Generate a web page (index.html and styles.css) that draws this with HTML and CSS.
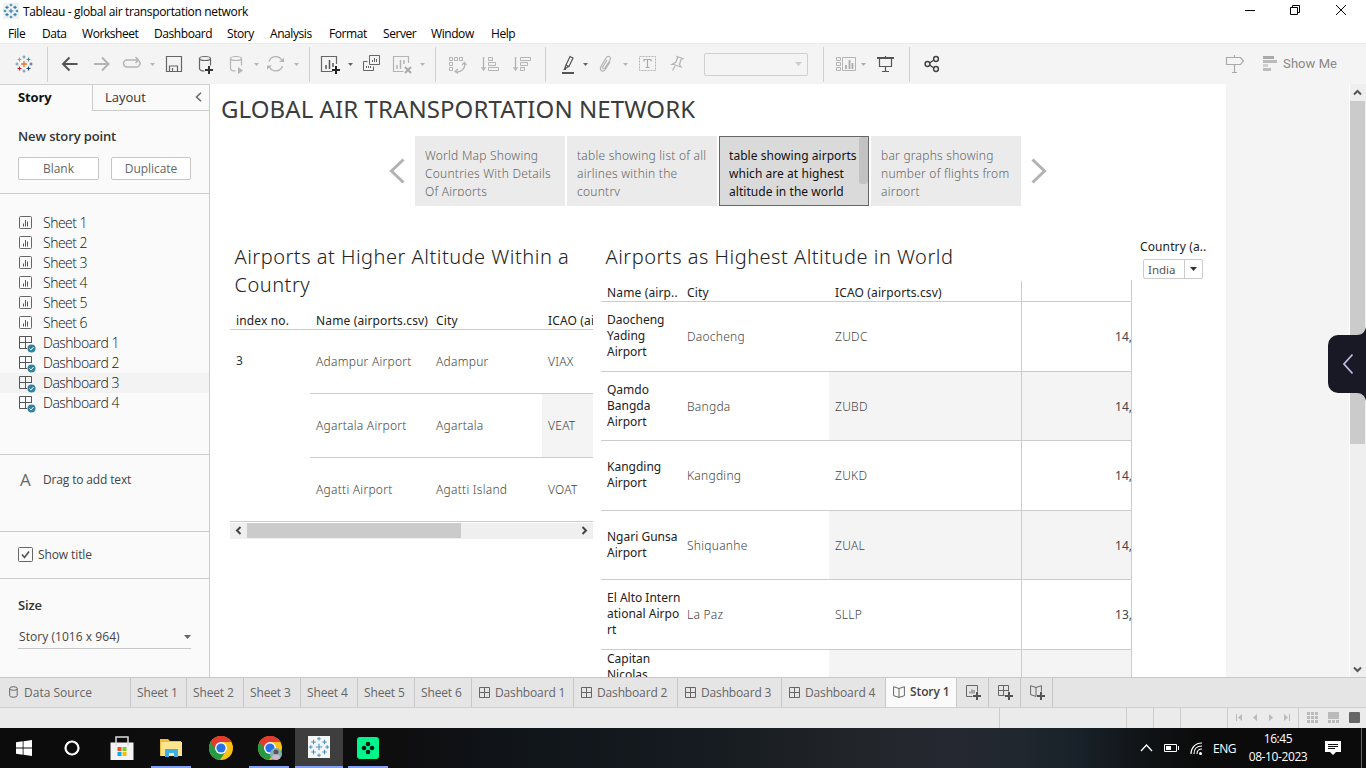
FILE: index.html
```html
<!DOCTYPE html>
<html lang="en">
<head>
<meta charset="utf-8">
<title>Tableau - global air transportation network</title>
<link rel="stylesheet" href="styles.css">
</head>
<body>
<svg width="0" height="0" class="defs">
  <defs>
    <g id="sheet"><rect x=".5" y=".5" width="12" height="12" rx="1" fill="none" stroke="#666"/><path d="M4.500 7.500v3M6.500 4v6.500M8.500 5.500v5" stroke="#555"/></g>
    <g id="dash"><path d="M12.500 7V.5H.5v12H8M6.500 .5v12M.5 6.500h12" fill="none" stroke="#555"/><circle cx="12.500" cy="12.500" r="4" fill="#357f9f"/><path d="M10.500 12.500l1.500 1.500 2.500-3" fill="none" stroke="#fff"/></g>
    <g id="grid"><path d="M.5 .5h10v10H.5zM5.500 .5v10M.5 5.500h10" fill="none" stroke="#666"/></g>
    <path id="down" d="M0 0h5L2.500 3z"/>
    <g id="chrome"><circle cx="12" cy="12" r="12" fill="#fbc116"/><path d="M12 12L1.600 6A12 12 0 0 1 22.400 6H12z" fill="#e33b2e"/><path d="M12 12L1.600 6A12 12 0 0 0 11 24l6-9z" fill="#269a43"/><path d="M1.600 6A12 12 0 0 1 22.400 6H12L7 14z" fill="#e33b2e"/><circle cx="12" cy="12" r="6" fill="#fff"/><circle cx="12" cy="12" r="4.600" fill="#2673e8"/></g>
    <path id="pluses" d="M12 8.500v7M8.500 12h7M12 1v4M10 3h4M12 19v4M10 21h4M3 10v4M1 12h4M21 10v4M19 12h4M6 4v5M3.500 6.500h5M18 4v5M15.500 6.500h5M6 15v5M3.500 17.500h5M18 15v5M15.500 17.500h5" fill="none"/>
  </defs>
</svg>

<header class="titlebar">
  <svg class="app-icon" width="16" height="16" viewBox="0 0 24 24"><rect width="24" height="24" fill="#f1f1f1"/><use href="#pluses" stroke="#2f7fae" stroke-width="1.700"/></svg>
  <span>Tableau - global air transportation network</span>
  <svg class="win-controls" width="120" height="22" viewBox="1240 0 120 22" fill="none" stroke="#000"><path d="M1245 10.500h10"/><path d="M1290.500 7.500h7v7h-7zM1292.500 7.500v-2h7v7h-2"/><path d="M1336 5l10 10M1346 5l-10 10"/></svg>
</header>
<nav class="menubar">
  <span class="m-file">File</span><span class="m-data">Data</span><span class="m-work">Worksheet</span><span class="m-dash">Dashboard</span><span class="m-story">Story</span><span class="m-ana">Analysis</span><span class="m-form">Format</span><span class="m-serv">Server</span><span class="m-wind">Window</span><span>Help</span>
</nav>

<div class="toolbar">
  <svg class="logo" width="18" height="18" viewBox="0 0 18 18" fill="none" stroke-width="1.200"><path d="M9 6v6M6 9h6" stroke="#e8762d" stroke-width="1.400"/><path d="M9 .5v3M7.500 2h3" stroke="#5b9bb5"/><path d="M9 14.500v3M7.500 16h3" stroke="#7a8fb5"/><path d="M2 7.500v3M.5 9h3" stroke="#6a9fb5"/><path d="M16 7.500v3M14.500 9h3" stroke="#5b6591"/><path d="M4.500 2.500v4M2.500 4.500h4" stroke="#eb912c"/><path d="M13.500 2.500v4M11.500 4.500h4" stroke="#59879b"/><path d="M4.500 11.500v4M2.500 13.500h4" stroke="#c72035"/><path d="M13.500 11.500v4M11.500 13.500h4" stroke="#1f447e"/></svg>
  <div class="tgroup g-data">
    <svg width="248" height="30" viewBox="60 49 248 30" fill="none">
      <path d="M77.500 64H63M69.500 57.500L63 64l6.500 6.500" stroke="#555" stroke-width="2"/>
      <path d="M94 64h14.500M102 57.500l6.500 6.500-6.500 6.500" stroke="#b4b4b4" stroke-width="2"/>
      <path d="M132 60h-5a3.500 3.500 0 0 0 0 7h10a3.500 3.500 0 0 0 2-6M131 60h7M135.500 57l3 3-3 3" stroke="#b4b4b4" stroke-width="1.500"/>
      <use href="#down" x="150" y="63" fill="#b4b4b4"/>
      <path d="M166.500 56.500h15v15h-15zM169.500 71v-5h8v5M172.500 71v-3" stroke="#666" stroke-width="1.200"/>
      <path d="M199.500 58.500v10c0 1.500 2 2.500 5 2.500M210.500 58.500v7" stroke="#666" stroke-width="1.200"/><ellipse cx="205" cy="58.500" rx="5.500" ry="2" stroke="#666" stroke-width="1.200"/><path d="M209 66v8M205 70h8" stroke="#333" stroke-width="2"/>
      <path d="M230.500 58.500v10c0 1.500 2 2.500 5 2.500M241.500 58.500v7" stroke="#b4b4b4" stroke-width="1.200"/><ellipse cx="236" cy="58.500" rx="5.500" ry="2" stroke="#b4b4b4" stroke-width="1.200"/><path d="M238 67l5 3.500-5 3.500z" fill="#b4b4b4"/>
      <use href="#down" x="254" y="63" fill="#b4b4b4"/>
      <path d="M269 61.500a7 7 0 0 1 13-1M282.500 66a7 7 0 0 1-13 1" stroke="#b4b4b4" stroke-width="1.300"/><path d="M284 58v4h-5zM267 69.500v-4h5z" fill="#b4b4b4"/>
      <use href="#down" x="294" y="63" fill="#b4b4b4"/>
    </svg>
  </div>
  <div class="tgroup g-sheet">
    <svg width="122" height="30" viewBox="313 49 122 30" fill="none">
      <path d="M336.500 64v-7.500h-15v15h11" stroke="#666" stroke-width="1.200"/><path d="M326 69v-4M329.500 69v-9M333 67v-4" stroke="#555" stroke-width="1.500"/><path d="M336 66v8M332 70h8" stroke="#222" stroke-width="2"/>
      <use href="#down" x="348" y="63" fill="#666"/>
      <path d="M369.500 55.500h10v9h-10zM367.500 61.500h-4v9h10v-4" stroke="#666"/><path d="M372.500 62v-2M374.500 62v-4M376.500 62v-3M366.500 68v-2M368.500 68v-2M370.500 68v-2" stroke="#666"/>
      <path d="M408.500 63v-6.500h-15v15h10" stroke="#b4b4b4" stroke-width="1.200"/><path d="M397 69v-4M400.500 69v-9M404 64v-4" stroke="#b4b4b4" stroke-width="1.500"/><path d="M405 67l6 6M411 67l-6 6" stroke="#aaa" stroke-width="2"/>
      <use href="#down" x="420" y="63" fill="#b4b4b4"/>
    </svg>
  </div>
  <div class="tgroup g-sort">
    <svg width="106" height="30" viewBox="438 49 106 30" fill="none" stroke="#b4b4b4">
      <path d="M449.500 57.500h3v3h-3zM454.500 57.500h3v3h-3zM459.500 57.500h3v3h-3zM449.500 62.500h3v3h-3zM449.500 67.500h3v3h-3z"/><path d="M464.500 63.500a7 7 0 0 1-9 8M462 65l2.500-2.500 2 2.500M458 69l-3 2.500 3 2" stroke-width="1.200"/>
      <path d="M483.500 57v12M481.500 67l2 3 2-3" stroke-width="1.300"/><path d="M488.500 57.500h4v3h-4zM488.500 62.500h7v3h-7zM488.500 67.500h10v3h-10z"/>
      <path d="M515.500 57v12M513.500 67l2 3 2-3" stroke-width="1.300"/><path d="M520.500 57.500h10v3h-10zM520.500 62.500h7v3h-7zM520.500 67.500h4v3h-4z"/>
    </svg>
  </div>
  <div class="tgroup g-format">
    <svg width="150" height="30" viewBox="549 49 150 30" fill="none">
      <path d="M562 73h12" stroke="#555" stroke-width="2"/><path d="M566 65l4-8.500 3 1.500-4 8.500zM566 65l-1.500 4 4-2.500M564 69.500h2" stroke="#555" stroke-width="1.200"/>
      <use href="#down" x="583" y="63" fill="#666"/>
      <path d="M606 60l-4 6.500c-1 2 1 3 2 1.500l5-8c2-3-2-5-4-2l-5 8.500c-2 4 2 6 4 3.500l5-8" transform="translate(1 0)" stroke="#b4b4b4" stroke-width="1.200"/>
      <use href="#down" x="623" y="63" fill="#b4b4b4"/>
      <rect x="639.500" y="56.500" width="16" height="14" stroke="#b4b4b4" stroke-dasharray="2 1"/><path d="M644 61.500v-2h7v2M647.500 59.500v8M645.500 67.500h4" stroke="#aaa" stroke-width="1.200"/>
      <path d="M677 56.500l6 2-2 1-1.500 5 1.500 2.500-3-1-4-1.500-2 0 4-2.500 1.500-4zM675 66l-2.500 4.500" stroke="#b4b4b4" stroke-width="1.200"/>
    </svg>
    <div class="fit-box"><svg width="7" height="4"><path d="M0 0h7L3.500 4z" fill="#ccc"/></svg></div>
  </div>
  <div class="tgroup g-view">
    <svg width="70" height="30" viewBox="828 49 70 30" fill="none">
      <path d="M836.500 57.500h4v3h-4zM836.500 62.500h4v3h-4zM836.500 67.500h4v3h-4zM842.500 57.500h13v13h-13z" stroke="#b4b4b4"/><path d="M846 69v-4M849.500 69v-9M852.500 69v-6" stroke="#aaa" stroke-width="1.800"/>
      <use href="#down" x="861" y="63" fill="#aaa"/>
      <path d="M877 58h17" stroke="#555" stroke-width="2"/><path d="M879.500 58v8.500h12V58M885.500 56v1M885.500 67v4M882 71.500h7" stroke="#555" stroke-width="1.200"/>
    </svg>
  </div>
  <div class="tgroup g-share">
    <svg width="22" height="30" viewBox="920 49 22 30" fill="none" stroke="#444" stroke-width="1.500"><circle cx="927.500" cy="64" r="2.400"/><circle cx="936" cy="59" r="2.400"/><circle cx="936" cy="69" r="2.400"/><path d="M929.500 63l4.500-3M929.500 65l4.500 3"/></svg>
  </div>
  <div class="showme">
    <svg width="54" height="22" viewBox="1224 53 54 22" fill="none"><path d="M1226.500 57.500h14l3 3.500-3 3.500h-14zM1234.500 55v2M1234.500 65v7M1232 72.500h5" stroke="#aaa" stroke-width="1.200"/><path d="M1263 57.500h11" stroke="#aaa" stroke-width="3"/><path d="M1263 61.500h14M1263 69.500h8" stroke="#bbb" stroke-width="3"/><path d="M1263 65.500h5" stroke="#d0d0d0" stroke-width="3"/></svg>
    <span>Show Me</span>
  </div>
</div>

<main class="work">
  <aside class="side">
    <div class="side-tabs"><div class="tab-on">Story</div><div class="tab-off"><span>Layout</span><svg width="7" height="10" fill="none" stroke="#666" stroke-width="1.500"><path d="M6 .7L1.500 5 6 9.300"/></svg></div></div>
    <section class="new-point">
      <h2>New story point</h2>
      <div class="btns"><button>Blank</button><button>Duplicate</button></div>
    </section>
    <section class="sheets">
      <div><svg width="18" height="18"><use href="#sheet"/></svg>Sheet 1</div>
      <div><svg width="18" height="18"><use href="#sheet"/></svg>Sheet 2</div>
      <div><svg width="18" height="18"><use href="#sheet"/></svg>Sheet 3</div>
      <div><svg width="18" height="18"><use href="#sheet"/></svg>Sheet 4</div>
      <div><svg width="18" height="18"><use href="#sheet"/></svg>Sheet 5</div>
      <div><svg width="18" height="18"><use href="#sheet"/></svg>Sheet 6</div>
      <div><svg width="18" height="18"><use href="#dash"/></svg>Dashboard 1</div>
      <div><svg width="18" height="18"><use href="#dash"/></svg>Dashboard 2</div>
      <div class="hover"><svg width="18" height="18"><use href="#dash"/></svg>Dashboard 3</div>
      <div><svg width="18" height="18"><use href="#dash"/></svg>Dashboard 4</div>
    </section>
    <section class="drag"><span class="glyph-a">A</span><span>Drag to add text</span></section>
    <section class="show-title"><svg width="15" height="15" fill="none"><rect x=".5" y=".5" width="14" height="14" rx="1" stroke="#666"/><path d="M4 7.500l2.500 3L11 4.500" stroke="#555" stroke-width="1.700"/></svg><span>Show title</span></section>
    <section class="size"><h2>Size</h2><div class="select"><span>Story (1016 x 964)</span><svg width="7" height="4"><path d="M0 0h7L3.500 4z" fill="#666"/></svg></div></section>
  </aside>

  <div class="canvas">
    <h1>GLOBAL AIR TRANSPORTATION NETWORK</h1>
    <div class="points">
      <svg width="16" height="26" fill="none" stroke="#b2b2b2" stroke-width="3"><path d="M14.500 1.500L2.500 13l12 11.500"/></svg>
      <div class="point-list">
        <div class="point"><p>World Map Showing<br>Countries With Details<br>Of Airports</p></div>
        <div class="point"><p>table showing list of all<br>airlines within the<br>country</p></div>
        <div class="point current"><p>table showing airports<br>which are at highest<br>altitude in the world</p><i class="thumb"></i></div>
        <div class="point"><p>bar graphs showing<br>number of flights from<br>airport</p></div>
      </div>
      <svg width="16" height="26" fill="none" stroke="#b2b2b2" stroke-width="3"><path d="M1.500 1.500L13.500 13l-12 11.500"/></svg>
    </div>
    <div class="views">
      <div class="view left">
        <h3>Airports at Higher Altitude Within a<br>Country</h3>
        <div class="lrow lhead"><span>index no.</span><span>Name (airports.csv)</span><span>City</span><span>ICAO (airports.csv)</span></div>
        <div class="lbody">
          <div class="idx">3</div>
          <div class="lrows">
            <div class="lrow"><span>Adampur Airport</span><span>Adampur</span><span>VIAX</span></div>
            <div class="lrow shade"><span>Agartala Airport</span><span>Agartala</span><span>VEAT</span></div>
            <div class="lrow"><span>Agatti Airport</span><span>Agatti Island</span><span>VOAT</span></div>
          </div>
        </div>
        <div class="hscroll"><svg width="7" height="9" fill="none" stroke="#444" stroke-width="2"><path d="M5.500 1L2 4.500 5.500 8"/></svg><i></i><svg width="7" height="9" fill="none" stroke="#444" stroke-width="2"><path d="M1.500 1L5 4.500 1.500 8"/></svg></div>
      </div>
      <div class="view right">
        <h3>Airports as Highest Altitude in World</h3>
        <div class="rrow rhead"><span>Name (airp..</span><span>City</span><span>ICAO (airports.csv)</span><span></span></div>
        <div class="rrow tall"><b>Daocheng<br>Yading<br>Airport</b><span>Daocheng</span><span>ZUDC</span><span class="num">14,</span></div>
        <div class="rrow shade"><b>Qamdo<br>Bangda<br>Airport</b><span>Bangda</span><span>ZUBD</span><span class="num">14,</span></div>
        <div class="rrow tall"><b>Kangding<br>Airport</b><span>Kangding</span><span>ZUKD</span><span class="num">14,</span></div>
        <div class="rrow shade"><b>Ngari Gunsa<br>Airport</b><span>Shiquanhe</span><span>ZUAL</span><span class="num">14,</span></div>
        <div class="rrow tall"><b>El Alto Intern<br>ational Airpo<br>rt</b><span>La Paz</span><span>SLLP</span><span class="num">13,</span></div>
        <div class="rrow shade last"><b>Capitan<br>Nicolas</b><span></span><span></span><span></span></div>
      </div>
      <div class="filter"><label>Country (a..</label><div class="combo"><span>India</span><em><svg width="7" height="4"><path d="M0 0h7L3.500 4z" fill="#333"/></svg></em></div></div>
    </div>
  </div>
  <div class="vscroll"><svg width="9" height="7" fill="none" stroke="#555" stroke-width="2"><path d="M1 5.500L4.500 2 8 5.500"/></svg><i></i><svg width="9" height="7" fill="none" stroke="#555" stroke-width="2"><path d="M1 1.500L4.500 5 8 1.500"/></svg></div>
</main>
<svg class="drawer" width="38" height="74" viewBox="0 0 38 74"><path d="M38 0v74c-1-5-4-8-9-8H10a10 10 0 0 1-10-10V18A10 10 0 0 1 10 8h19c5 0 8-3 9-8z" fill="#181925"/><path d="M24.500 27.500L16 37l8.500 9.500" fill="none" stroke="#b9bce0" stroke-width="1.800"/></svg>

<div class="tabs">
  <div class="t src"><svg width="9" height="12" fill="none" stroke="#666"><path d="M.7 2.500v7c0 1 1.500 1.700 3.700 1.700s3.800-.7 3.800-1.700v-7"/><ellipse cx="4.500" cy="2.500" rx="3.800" ry="1.800"/></svg>Data Source</div>
  <div class="t s1">Sheet 1</div><div class="t">Sheet 2</div><div class="t">Sheet 3</div><div class="t">Sheet 4</div><div class="t">Sheet 5</div><div class="t">Sheet 6</div>
  <div class="t d d1"><svg width="11" height="11"><use href="#grid"/></svg>Dashboard 1</div><div class="t d"><svg width="11" height="11"><use href="#grid"/></svg>Dashboard 2</div><div class="t d"><svg width="11" height="11"><use href="#grid"/></svg>Dashboard 3</div><div class="t d"><svg width="11" height="11"><use href="#grid"/></svg>Dashboard 4</div>
  <div class="t story"><svg width="12" height="12" fill="none" stroke="#666"><path d="M6 2.500L.6.700v9L6 11.400l5.400-1.700v-9zM6 2.500v9"/></svg>Story 1</div>
  <div class="t add"><svg width="16" height="16" fill="none" stroke="#666"><path d="M11.500 6.500V.5H.5v11H6.500M4 8.500v-2M6 8.500v-4M8 8.500V5"/><path d="M11 7v8M7 11h8" stroke="#555" stroke-width="2"/></svg></div>
  <div class="t add"><svg width="16" height="16" fill="none" stroke="#666"><path d="M10.500 6.500V.5H.5v10H6.500M5.500 .5v10M.5 5.500h10"/><path d="M11 7v8M7 11h8" stroke="#555" stroke-width="2"/></svg></div>
  <div class="t add"><svg width="16" height="16" fill="none" stroke="#666"><path d="M6 2.500L.6.700v9L6 11.400M6 2.500L11.400.7V6.500M6 2.500v9"/><path d="M11 7v8M7 11h8" stroke="#555" stroke-width="2"/></svg></div>
</div>
<div class="status">
  <svg width="367" height="21" viewBox="999 707 367 21"><path d="M999.500 707v21M1126.500 707v21M1153.500 707v21M1180.500 707v21M1227.500 707v21M1298.500 707v21" stroke="#ccc"/><path d="M1242 714v7l-4-3.500zM1257 714v7l-4-3.500zM1269 714v7l4-3.500zM1284 714v7l4-3.500zM1236 714h1v7h-1zM1289 714h1v7h-1z" fill="#bbb"/><path d="M1307 712h3v3h-3zM1311 712h3v3h-3zM1315 712h3v3h-3zM1307 716h3v3h-3zM1311 716h3v3h-3zM1315 716h3v3h-3zM1307 720h3v3h-3zM1311 720h3v3h-3zM1315 720h3v3h-3zM1328 712h11v7h-11zM1328 720h3v3h-3zM1332 720h3v3h-3zM1336 720h3v3h-3z" fill="#bbb"/><rect x="1349" y="712" width="11" height="11" rx="1" fill="#666"/></svg>
</div>
<footer class="taskbar">
  <div class="task"><svg width="16" height="16" fill="#fff"><path d="M0 2.300l6.700-1v6.200H0zM7.500 1.200L16 0v7.500H7.500zM0 8.500h6.700v6.200L0 13.700zM7.500 8.500H16V16l-8.500-1.200z"/></svg></div>
  <div class="task"><svg width="16" height="16"><circle cx="8" cy="8" r="6.500" fill="none" stroke="#fff" stroke-width="2.200"/></svg></div>
  <div class="task"><svg width="24" height="24"><path d="M.5 6.500h23V24H.5z" fill="#f4f4f4"/><path d="M6 10V1h12v9" fill="none" stroke="#ddd" stroke-width="1.500"/><path fill="#f1511b" d="M7.500 11h4v4h-4z"/><path fill="#80cc28" d="M12.500 11h4v4h-4z"/><path fill="#00adef" d="M7.500 16h4v4h-4z"/><path fill="#fbbc09" d="M12.500 16h4v4h-4z"/></svg></div>
  <div class="task open"><svg width="22" height="20"><path d="M0 1h8l2 2h11v15H0z" fill="#f0bd3d"/><path d="M1 4h21v14H1z" fill="#ffe48f"/><path d="M5 19v-8h13v8h-4v-4H9v4z" fill="#3cb0e5"/></svg></div>
  <div class="task"><svg width="24" height="24"><use href="#chrome"/></svg></div>
  <div class="task open"><svg width="24" height="24"><use href="#chrome"/><circle cx="18" cy="18" r="6" fill="#78b9b5"/><circle cx="18" cy="16" r="2.500" fill="#6b4a50"/><path d="M14 22c0-5 8-5 8 0-2 2.500-6 2.500-8 0" fill="#d5b5c8"/></svg></div>
  <div class="task active"><svg width="22" height="22" viewBox="0 0 24 24"><rect width="24" height="24" fill="#f4f6f8"/><use href="#pluses" stroke="#4b93c0" stroke-width="1.200"/></svg></div>
  <div class="task open"><svg width="22" height="22"><rect width="22" height="22" rx="3" fill="#00f58a"/><g fill="#0c1a14"><circle cx="11" cy="7" r="2.300"/><circle cx="11" cy="15" r="2.300"/><circle cx="7" cy="11" r="2.300"/><circle cx="15" cy="11" r="2.300"/></g></svg></div>
  <div class="tray">
    <svg width="66" height="20" viewBox="1138 738 66 20" fill="none" stroke="#fff"><path d="M1141 751l5.500-6 5.500 6" stroke-width="1.300"/><path d="M1164.500 744.500h12v7h-12zM1178.500 746v4"/><path d="M1166 746h5v4h-5z" fill="#fff" stroke="none"/><path d="M1191 754c0-6 4-11 11-11M1194 754c0-5 3-8 8-8M1197 754c0-3 2-5 5-5" stroke-width="1.100"/><circle cx="1200.500" cy="753.500" r="1.500" fill="#fff" stroke="none"/></svg>
    <span class="lang">ENG</span>
    <div class="clock">16:45<br>08-10-2023</div>
    <svg width="16" height="16"><path d="M0 1h16v11h-5l-3 3-3-3H0z" fill="#fff"/><path d="M3 4.500h10M3 6.500h10M3 8.500h7" stroke="#111"/></svg>
    <i></i>
  </div>
</footer>
</body>
</html>
```
FILE: styles.css
```css
* { box-sizing: border-box; }
body { margin: 0; width: 1366px; height: 768px; overflow: hidden; display: flex; flex-direction: column; background: #fff; font-family: "Open Sans", "Noto Sans", sans-serif; font-size: 12px; color: #333; white-space: nowrap; }
h1, h2, h3, p { margin: 0; font-weight: inherit; }
svg { flex: none; display: block; }
.defs { position: absolute; }

.titlebar { height: 22px; display: flex; align-items: center; padding: 0 6px 0 3px; color: #000; letter-spacing: -.34px; }
.app-icon { margin: 0 4px 0 0; }
.win-controls { margin-left: auto; }
.menubar { height: 21px; display: flex; align-items: center; padding: 1px 0 0 8px; color: #000; letter-spacing: -.43px; }
.m-file { width: 34px; } .m-data { width: 40px; } .m-work { width: 72px; } .m-dash { width: 73px; } .m-story { width: 43px; }
.m-ana { width: 59px; } .m-form { width: 54px; } .m-serv { width: 48px; } .m-wind { width: 60px; }

.toolbar { height: 41px; flex: none; display: flex; align-items: center; background: #f4f4f4; border-top: 1px solid #ebebeb; padding-right: 29px; }
.logo { margin: 0 14px 0 15px; }
.tgroup { flex: none; height: 35px; display: flex; align-items: center; border-left: 1px solid #d0d0d0; }
.g-data { width: 262px; padding-left: 12px; }
.g-sheet { width: 126px; padding-left: 3px; }
.g-sort { width: 110px; padding-left: 2px; }
.g-format { width: 278px; padding-left: 3px; }
.g-view { width: 86px; padding-left: 4px; }
.g-share { padding-left: 10px; }
.fit-box { width: 104px; height: 23px; margin-left: 5px; border: 1px solid #d0d0d0; border-radius: 2px; display: flex; align-items: center; justify-content: flex-end; padding-right: 5px; }
.showme { margin-left: auto; display: flex; align-items: center; gap: 5px; font: 400 13px Roboto, sans-serif; color: #888; letter-spacing: .05px; }
.showme span { margin-top: -1px; }

.work { height: 593px; flex: none; display: flex; background: #f4f4f4; overflow: hidden; }
.side { width: 210px; flex: none; background: #fafafa; border-right: 1px solid #ccc; border-top: 1px solid #d0d0d0; display: flex; flex-direction: column; color: #444; }
.side h2 { font-weight: 600; font-size: 13px; line-height: 18px; color: #333; letter-spacing: -.13px; }
.side-tabs { height: 26px; display: flex; font-size: 13px; line-height: 25px; }
.tab-on { width: 92px; padding-left: 18px; font-weight: 700; color: #111; letter-spacing: -.15px; }
.tab-off { flex: 1; border-left: 1px solid #ccc; border-bottom: 1px solid #ccc; padding: 0 7px 0 12px; display: flex; justify-content: space-between; color: #333; }
.tab-off svg { margin-top: 7px; }
.new-point { height: 83px; border-bottom: 1px solid #ccc; padding: 16px 18px 0; }
.btns { display: flex; gap: 12px; margin-top: 12px; }
.btns button { height: 23px; width: 81px; padding: 0 0 1px; border: 1px solid #c6c6c6; border-radius: 2px; background: #fff; font: 400 12px "Open Sans", sans-serif; color: #666; letter-spacing: -.05px; }
.btns button + button { width: 80px; }
.sheets { height: 261px; border-bottom: 1px solid #ccc; padding-top: 19px; font-weight: 300; font-size: 14px; letter-spacing: -.5px; color: #111; }
.sheets div { height: 20px; display: flex; align-items: center; gap: 6px; padding-left: 19px; line-height: 18px; }
.sheets svg { margin-top: 4px; }
.hover { background: #f3f3f3; }
.drag { height: 77px; border-bottom: 1px solid #ccc; display: flex; padding: 15px 0 0 20px; line-height: 19px; letter-spacing: -.15px; }
.glyph-a { width: 23px; font-size: 17px; color: #666; }
.show-title { height: 47px; border-bottom: 1px solid #ccc; display: flex; align-items: center; padding: 0 0 1px 18px; gap: 5px; letter-spacing: -.1px; }
.size { padding: 17px 18px 0; }
.select { width: 173px; height: 24px; margin-top: 11px; border-bottom: 1px solid #c6c6c6; padding-left: 1px; display: flex; align-items: center; justify-content: space-between; letter-spacing: .05px; }

.canvas { width: 1016px; flex: none; height: 593px; background: #fff; overflow: hidden; font-family: "Noto Sans", sans-serif; }
h1 { font-size: 24px; font-weight: 400; line-height: 34px; padding: 8px 0 0 11px; letter-spacing: .08px; color: #3c3c3c; height: 52px; }
.points { display: flex; align-items: center; height: 70px; padding-left: 179px; gap: 10px; }
.points > svg { margin-top: -1px; }
.point-list { display: flex; gap: 2px; }
.point { position: relative; width: 150px; height: 70px; background: #ebebeb; padding: 11px 0 0 10px; font-weight: 300; color: #666; letter-spacing: .24px; }
.point p { line-height: 18px; height: 49px; overflow: hidden; }
.current { background: #dadada; border: 1px solid #666; padding: 10px 0 0 9px; font-weight: 400; color: #111; letter-spacing: .05px; }
.thumb { position: absolute; right: 0; top: 0; width: 9px; height: 47px; border-radius: 3px; background: #c2c2c2; }
.views { display: flex; padding: 37px 0 0 20px; }
h3 { font-size: 20px; line-height: 28px; font-weight: 300; letter-spacing: .5px; color: #222; padding-left: 4.500px; }
.view { overflow: hidden; letter-spacing: .26px; font-weight: 300; }
.view.left { width: 363px; margin-right: 8px; }
.lhead { height: 31px; border-bottom: 1px solid #ccc; color: #222; font-weight: 400; letter-spacing: .14px; padding-top: 13px; line-height: 18px; }
.lrow { display: flex; }
.lrow span { flex: none; padding-left: 6px; }
.lhead span:nth-child(1) { width: 80px; }
.lhead span:nth-child(2) { width: 120px; }
.lhead span:nth-child(3) { width: 112px; }
.lbody { display: flex; border-bottom: 1px solid #ccc; height: 192px; }
.idx { width: 80px; flex: none; padding: 22px 0 0 6px; font-weight: 400; line-height: 18px; }
.lrows { flex: 1; min-width: 0; }
.lrows .lrow { height: 64px; border-bottom: 1px solid #ccc; line-height: 64px; color: #444; }
.lrows span:nth-child(1) { width: 120px; }
.lrows span:nth-child(2) { width: 112px; }
.lrows span:nth-child(3) { width: 60px; }
.lrows .shade span:nth-child(3) { background: #f4f4f4; height: 63px; }
.hscroll { height: 16px; margin-top: 1px; background: #efefef; display: flex; align-items: center; padding: 0 5px 1px; }
.hscroll i { width: 214px; height: 15px; background: #cbcbcb; margin: 0 auto 0 5px; }
.view.right { width: 531px; height: 434px; border-style: solid; border-width: 0 1px 0 0; border-image: linear-gradient(#fff 38px, #ccc 38px) 1; }
.rrow { height: 69px; display: grid; grid-template-columns: 80px 148px 192px 110px; border-bottom: 1px solid #ccc; color: #444; }
.rrow.tall { height: 70px; }
.rrow > * { display: flex; align-items: center; padding-left: 6px; }
.rrow > b { font-weight: 400; line-height: 16px; color: #222; letter-spacing: 0; padding-bottom: 1px; }
.rrow > :nth-child(4) { border-left: 1px solid #ccc; }
.rrow.rhead { height: 21px; margin-top: 10px; font-weight: 400; letter-spacing: .14px; color: #222; }
.rhead > * { padding-top: 3px; }
.rrow.shade > :nth-child(n+3) { background: #f4f4f4; }
.num { justify-content: flex-end; font-weight: 400; overflow: hidden; margin-right: -2px; padding-right: 1px; letter-spacing: 0; }
.last > b { align-items: flex-start; padding-top: 1px; }
.filter { padding: 0 0 0 8px; color: #222; }
.filter label { display: block; line-height: 16px; margin-top: -4px; letter-spacing: .12px; }
.combo { width: 60px; height: 20px; margin: 4px 0 0 3px; border: 1px solid #ccc; border-radius: 2px; display: flex; align-items: center; font-size: 11.500px; padding-left: 4px; color: #555; }
.combo em { margin-left: auto; width: 18px; height: 18px; border-left: 1px solid #ccc; display: flex; align-items: center; justify-content: center; }
.vscroll { width: 17px; margin-left: auto; background: #efefef; border-left: 1px solid #fff; display: flex; flex-direction: column; align-items: center; padding: 5px 1px 4px 0; }
.vscroll i { width: 15px; height: 343px; background: #cbcbcb; margin: 5px 0 auto; }
.drawer { position: absolute; left: 1328px; top: 327px; }

.tabs { height: 31px; flex: none; display: flex; background: #e5e5e5; border-top: 1px solid #c8c8c8; border-bottom: 1px solid #d0d0d0; color: #666; letter-spacing: -.15px; }
.t { width: 57px; border-right: 1px solid #c8c8c8; display: flex; align-items: center; padding: 1px 0 1px 6px; }
.src { width: 131px; padding-left: 9px; gap: 6px; letter-spacing: 0; }
.src svg { margin-top: -2px; }
.s1 { width: 56px; }
.d { width: 104px; padding-left: 7px; gap: 5px; }
.d1 { width: 102px; }
.story { width: 71px; background: #fafafa; font-weight: 600; gap: 5px; padding: 0 0 2px 7px; color: #444; letter-spacing: -.1px; }
.add { width: 32px; padding: 1px 0 0 9px; }
.status { height: 20px; flex: none; background: #ebebeb; display: flex; justify-content: flex-end; align-items: flex-end; overflow: hidden; }

.taskbar { height: 40px; flex: none; display: flex; background: linear-gradient(90deg, #0c0c0c 0, #0e0e0f 400px, #10151a 520px, #151b20 700px, #222529 860px, #252831 950px, #20272e 1020px, #182129 1080px, #0f1214 1150px, #0b0b0b 1200px); }
.task { width: 48px; display: flex; align-items: center; justify-content: center; margin-right: 1.150px; }
.task:nth-child(1) { margin-right: 0; }
.task:nth-child(2) { margin-right: 2px; }
.task:nth-child(5) { padding-left: 2px; }
.task:nth-child(6) { padding-left: 1px; }
.open { background: linear-gradient(#82a0f5, #82a0f5) center bottom / 40px 2px no-repeat; }
.active { background: #3e3e3e; border-bottom: 2px solid #82a0f5; }
.tray { margin-left: auto; display: flex; align-items: center; color: #fff; letter-spacing: -.4px; }
.lang { width: 35px; padding-left: 9px; letter-spacing: -.5px; }
.clock { width: 76px; margin: 0 9px 0 1px; text-align: center; line-height: 18px; }
.tray i { width: 1px; height: 40px; background: #666; margin: 0 4px 0 20px; }
```
